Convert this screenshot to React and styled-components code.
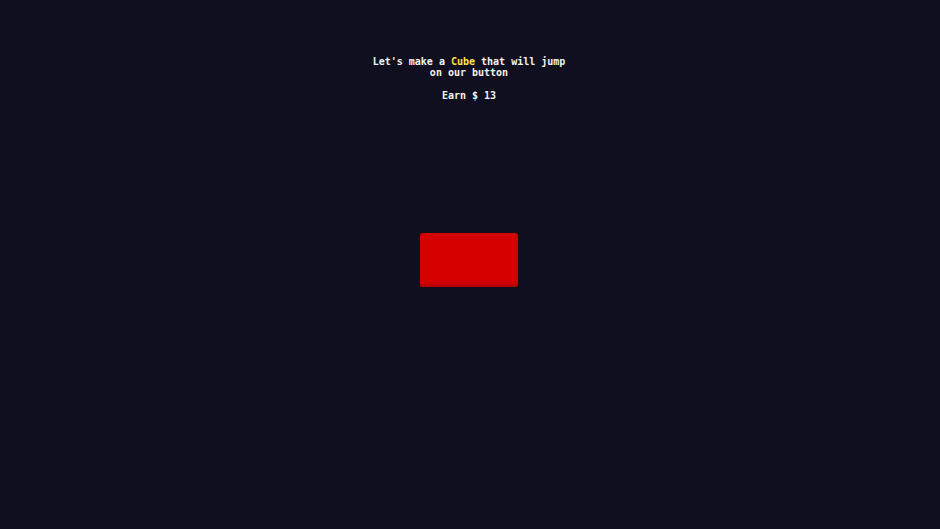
import React from "react";
import styled, { createGlobalStyle } from "styled-components";

const Global = createGlobalStyle`
  html, body { margin: 0; padding: 0; background: #0f0f1f; }
  body { width: 940px; height: 529px; overflow: hidden; }
`;

const Page = styled.div`
  width: 940px;
  height: 529px;
  background: #0f0f1f;
  display: flex;
  flex-direction: column;
  align-items: center;
  font-family: "DejaVu Sans Mono", "Liberation Mono", monospace;
  font-weight: bold;
  font-size: 10px;
  line-height: 11px;
  color: #f2f2f2;
  padding: 56px 2px 0 0;
  box-sizing: border-box;
`;

const Title = styled.div`
  text-align: center;
  width: 200px;
`;

const Accent = styled.span`
  color: #ffe14a;
`;

const Earn = styled.div`
  margin-top: 12px;
  text-align: center;
`;

const JumpButton = styled.button`
  margin-top: 132px;
  width: 98px;
  height: 54px;
  border: none;
  border-radius: 3px;
  background: #d40000;
  box-shadow: inset 0 -3px 0 #b80000, 0 0 1px #700000;
  padding: 0;
  cursor: pointer;
`;

export default function App() {
  return (
    <>
      <Global />
      <Page>
        <Title>
          Let's make a <Accent>Cube</Accent> that will jump on our button
        </Title>
        <Earn>Earn $ 13</Earn>
        <JumpButton aria-label="jump" />
      </Page>
    </>
  );
}
